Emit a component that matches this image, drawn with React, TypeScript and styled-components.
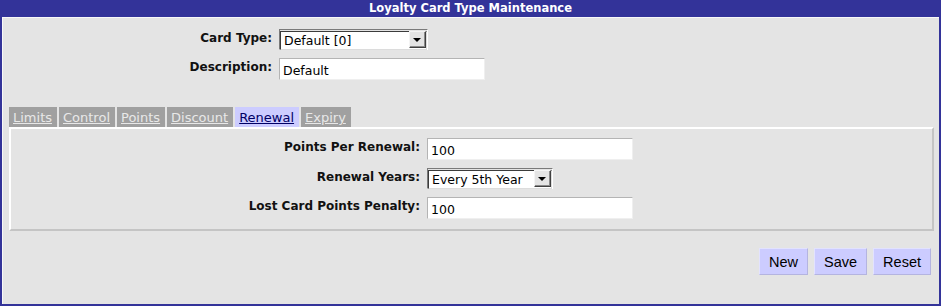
import React, { FC } from 'react';
import styled, { createGlobalStyle } from 'styled-components';

const GlobalStyle = createGlobalStyle`
  html, body {
    margin: 0;
    padding: 0;
    background: #e4e4e4;
  }
  body {
    font-family: "DejaVu Sans", Verdana, sans-serif;
  }
`;

const tabs = ['Limits', 'Control', 'Points', 'Discount', 'Renewal', 'Expiry'];

const Frame = styled.div`
  box-sizing: border-box;
  width: 941px;
  height: 306px;
  display: flex;
  flex-direction: column;
  border: 2px solid #333399;
  border-top: 0;
  background: #e4e4e4;
`;

const TitleBar = styled.div`
  height: 17px;
  line-height: 17px;
  margin: 0 -2px;
  background: #333399;
  color: #ffffff;
  font-size: 11.5px;
  font-weight: bold;
  text-align: center;
`;

const Content = styled.div`
  flex: 1;
  border-top: 1px solid #f8f8f8;
  border-left: 1px solid #f8f8f8;
  padding: 0 5px 0 6px;
`;

const FormGrid = styled.div<{ $labelWidth: number }>`
  display: grid;
  grid-template-columns: ${(p) => p.$labelWidth}px auto;
  column-gap: 7px;
  row-gap: 8px;
  align-items: center;
  justify-items: start;
`;

const TopForm = styled(FormGrid)`
  margin-left: -6px;
  padding-top: 11px;
`;

const Label = styled.label`
  justify-self: end;
  margin-top: -4px;
  font-size: 12px;
  font-weight: bold;
  color: #111;
  white-space: nowrap;
`;

const TextInput = styled.input<{ $width: number }>`
  box-sizing: border-box;
  width: ${(p) => p.$width}px;
  height: 22px;
  margin: 0;
  padding: 2px 3px 0;
  border: 1px solid;
  border-color: #b4b4b4 #efefef #efefef #b4b4b4;
  background: #ffffff;
  font-family: "DejaVu Sans", Verdana, sans-serif;
  font-size: 12.5px;
  color: #000;
  outline: none;
`;

const SelectWrap = styled.div<{ $width: number }>`
  position: relative;
  box-sizing: border-box;
  width: ${(p) => p.$width}px;
  height: 21px;
  border: 1px solid;
  border-color: #7a7a7a #ffffff #ffffff #7a7a7a;
`;

const NativeSelect = styled.select`
  box-sizing: border-box;
  width: 100%;
  height: 100%;
  margin: 0;
  padding: 1px 0 0 3px;
  border: 1px solid;
  border-color: #3c3c3c #dcdcdc #dcdcdc #3c3c3c;
  border-radius: 0;
  appearance: none;
  background: #ffffff;
  font-family: "DejaVu Sans", Verdana, sans-serif;
  font-size: 12.5px;
  color: #000;
  outline: none;
`;

const ArrowButton = styled.span`
  position: absolute;
  top: 1px;
  right: 1px;
  box-sizing: border-box;
  width: 17px;
  height: 17px;
  display: flex;
  align-items: center;
  justify-content: center;
  background: #e4e4e4;
  border: 1px solid;
  border-color: #f4f4f4 #404040 #404040 #f4f4f4;
  box-shadow: inset -1px -1px 0 #8a8a8a;
  pointer-events: none;

  &::after {
    content: '';
    width: 0;
    height: 0;
    border-left: 4px solid transparent;
    border-right: 4px solid transparent;
    border-top: 4px solid #000;
    margin: 1px 1px 0 0;
  }
`;

const TabBar = styled.div`
  display: flex;
  gap: 2px;
  margin-top: 27px;
`;

const Tab = styled.span<{ $active?: boolean }>`
  height: 20px;
  line-height: 21px;
  padding: 0 5px 0 4px;
  background: ${(p) => (p.$active ? '#ccccff' : '#a0a0a0')};
  color: ${(p) => (p.$active ? '#000066' : '#e8e8e8')};
  font-size: 13px;
  text-decoration: underline;
  cursor: pointer;
`;

const Panel = styled.div`
  box-sizing: border-box;
  height: 104px;
  padding-top: 9px;
  border: 2px solid;
  border-color: #ffffff #c4c4c4 #c4c4c4 #ffffff;
`;

const ButtonRow = styled.div`
  display: flex;
  justify-content: flex-end;
  gap: 6px;
  margin-top: 17px;
  padding-right: 3px;
`;

const Button = styled.button`
  height: 27px;
  padding: 0 9px;
  background: #ccccff;
  border: 1px solid;
  border-color: #e2e2ff #b4b4e0 #b4b4e0 #e2e2ff;
  font-family: "Liberation Sans", Arial, sans-serif;
  font-size: 14.5px;
  color: #000;
  cursor: pointer;
`;

const Select: FC<{ width: number; value: string; options: string[] }> = ({ width, value, options }) => (
  <SelectWrap $width={width}>
    <NativeSelect defaultValue={value}>
      {options.map((o) => (
        <option key={o}>{o}</option>
      ))}
    </NativeSelect>
    <ArrowButton />
  </SelectWrap>
);

const App: FC = () => {
  return (
    <>
      <GlobalStyle />
      <Frame>
        <TitleBar>Loyalty Card Type Maintenance</TitleBar>
        <Content>
          <TopForm $labelWidth={269}>
            <Label>Card Type:</Label>
            <Select width={149} value="Default [0]" options={['Default [0]']} />
            <Label>Description:</Label>
            <TextInput $width={206} defaultValue="Default" />
          </TopForm>

          <TabBar>
            {tabs.map((t) => (
              <Tab key={t} $active={t === 'Renewal'}>
                {t}
              </Tab>
            ))}
          </TabBar>
          <Panel>
            <FormGrid $labelWidth={409}>
              <Label>Points Per Renewal:</Label>
              <TextInput $width={206} defaultValue="100" />
              <Label>Renewal Years:</Label>
              <Select
                width={126}
                value="Every 5th Year"
                options={['Every Year', 'Every 2nd Year', 'Every 3rd Year', 'Every 4th Year', 'Every 5th Year']}
              />
              <Label>Lost Card Points Penalty:</Label>
              <TextInput $width={206} defaultValue="100" />
            </FormGrid>
          </Panel>

          <ButtonRow>
            <Button>New</Button>
            <Button>Save</Button>
            <Button>Reset</Button>
          </ButtonRow>
        </Content>
      </Frame>
    </>
  );
};

export default App;
